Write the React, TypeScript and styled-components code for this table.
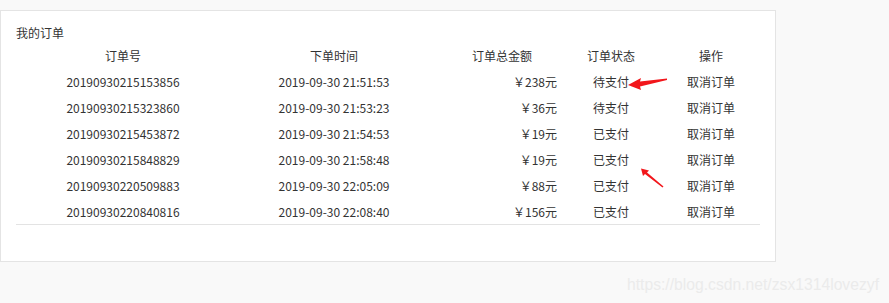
import { createGlobalStyle, styled } from 'styled-components';

interface IOrder {
  id: string;
  time: string;
  amount: number;
  paid: boolean;
}

const orders: IOrder[] = [
  { id: '20190930215153856', time: '2019-09-30 21:51:53', amount: 238, paid: false },
  { id: '20190930215323860', time: '2019-09-30 21:53:23', amount: 36, paid: false },
  { id: '20190930215453872', time: '2019-09-30 21:54:53', amount: 19, paid: true },
  { id: '20190930215848829', time: '2019-09-30 21:58:48', amount: 19, paid: true },
  { id: '20190930220509883', time: '2019-09-30 22:05:09', amount: 88, paid: true },
  { id: '20190930220840816', time: '2019-09-30 22:08:40', amount: 156, paid: true },
];

const GlobalStyle = createGlobalStyle`
  html, body {
    margin: 0;
    background: #f9f9f9;
  }
  body {
    font-family: "Liberation Sans Narrow", "Noto Sans CJK SC", sans-serif;
    font-size: 12px;
    color: #333;
  }
`;

const Page = styled.div`
  position: relative;
  width: 889px;
  height: 303px;
  padding-top: 10px;
  box-sizing: border-box;
`;

const Panel = styled.div`
  width: 776px;
  height: 252px;
  box-sizing: border-box;
  padding: 13px 15px 0;
  background: #fff;
  border: 1px solid #e4e4e4;
`;

const Title = styled.div`
  line-height: 18px;
`;

const Table = styled.div`
  width: 744px;
  border-bottom: 1px solid #e3e3e3;
`;

const Row = styled.div`
  display: grid;
  grid-template-columns: 214px 208px 128px 90px 104px;
  height: 26px;
  align-items: center;
`;

const Cell = styled.div<{ $align?: 'center' | 'right'; $shift?: number }>`
  text-align: ${(p) => p.$align || 'center'};
  padding-right: ${(p) => (p.$align === 'right' ? '9px' : '0')};
  padding-left: ${(p) => p.$shift || 0}px;
  white-space: nowrap;
`;

const Watermark = styled.div`
  position: absolute;
  right: 10px;
  bottom: 9px;
  font-family: "Liberation Sans", Arial, sans-serif;
  font-size: 15.7px;
  color: #ebebeb;
`;

const Marks = styled.svg`
  position: absolute;
  left: 0;
  top: 0;
  pointer-events: none;
`;

export default function App() {
  return (
    <Page>
      <GlobalStyle />
      <Panel>
        <Title>我的订单</Title>
        <Table>
          <Row>
            <Cell>订单号</Cell>
            <Cell>下单时间</Cell>
            <Cell>订单总金额</Cell>
            <Cell>订单状态</Cell>
            <Cell $shift={6}>操作</Cell>
          </Row>
          {orders.map((o) => (
            <Row key={o.id}>
              <Cell>{o.id}</Cell>
              <Cell>{o.time}</Cell>
              <Cell $align="right">￥{o.amount}元</Cell>
              <Cell>{o.paid ? '已支付' : '待支付'}</Cell>
              <Cell $shift={6}>取消订单</Cell>
            </Row>
          ))}
        </Table>
      </Panel>
      <Watermark>https://blog.csdn.net/zsx1314lovezyf</Watermark>
      <Marks width="889" height="303" viewBox="0 0 889 303">
        <path d="M667 78.5 L640 81.5 L641 78 L628 85 L641 90 L640 86.5 L667 80 Z" fill="#f2161b" />
        <path d="M663.5 186.5 L647 172.5 L649 170.5 L641 168.5 L643 176 L645 174 L662.5 187.5 Z" fill="#f2161b" />
      </Marks>
    </Page>
  );
}
